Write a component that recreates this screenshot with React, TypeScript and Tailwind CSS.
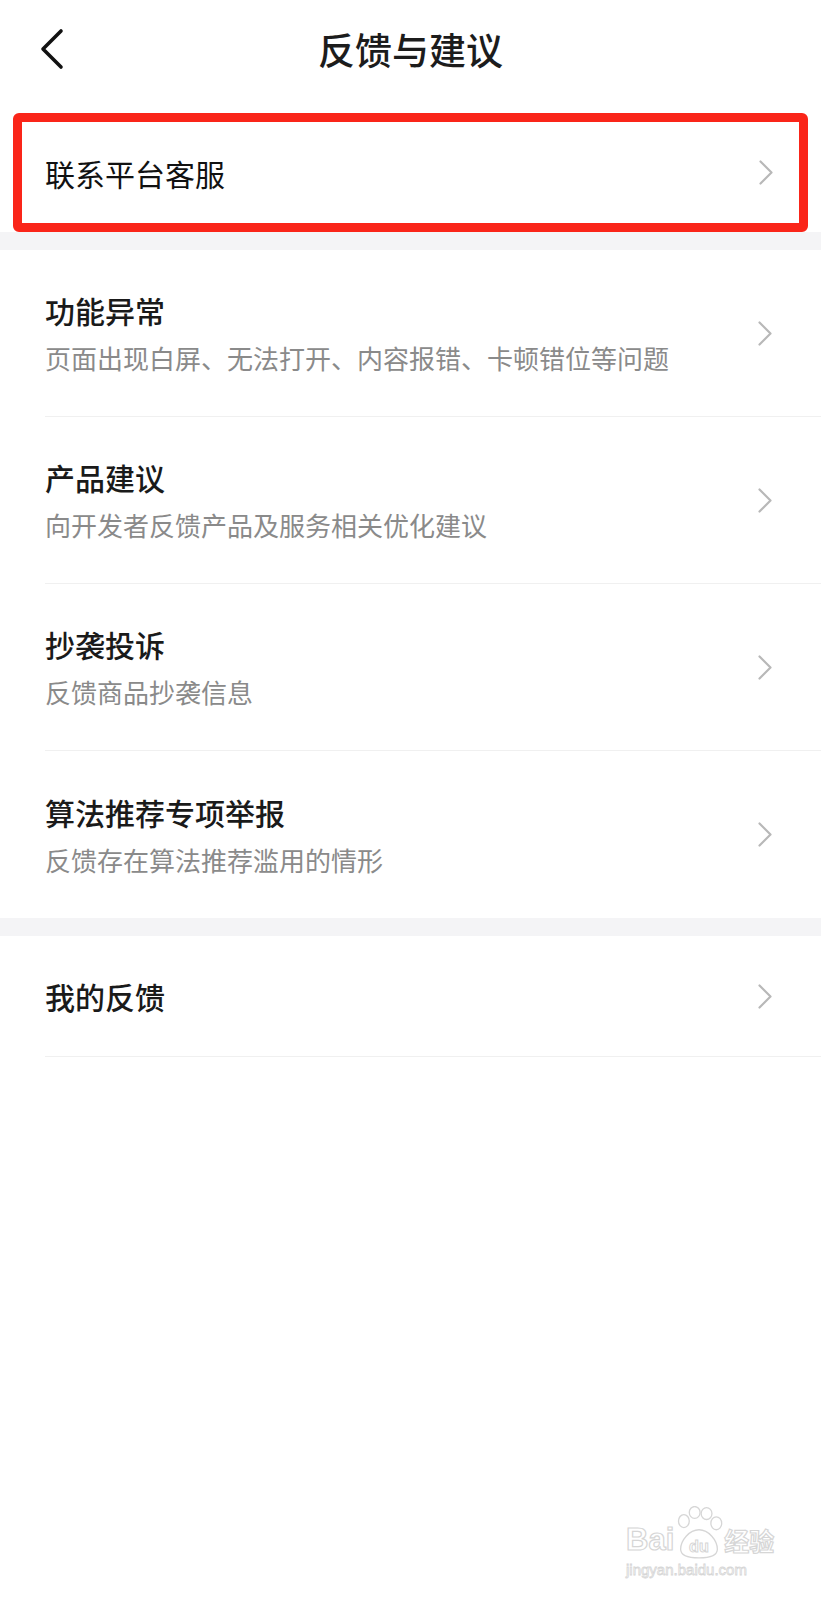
import React from 'react';

const ITEMS = [
  { title: '功能异常', desc: '页面出现白屏、无法打开、内容报错、卡顿错位等问题' },
  { title: '产品建议', desc: '向开发者反馈产品及服务相关优化建议' },
  { title: '抄袭投诉', desc: '反馈商品抄袭信息' },
  { title: '算法推荐专项举报', desc: '反馈存在算法推荐滥用的情形', last: true },
];

function Chevron() {
  return (
    <svg width="16" height="27" viewBox="0 0 16 27" fill="none" className="shrink-0">
      <path d="M2.5 2.5 L13.5 13.5 L2.5 24.5" stroke="#b8b8b8" strokeWidth="2.2" strokeLinecap="round" strokeLinejoin="round" />
    </svg>
  );
}

function Watermark() {
  return (
    <div className="absolute left-[626px] top-[1506px] flex flex-col items-start select-none">
      <div className="flex items-end text-transparent [-webkit-text-stroke:1.2px_#d6d6d6]">
        <span className="font-['Liberation_Sans',sans-serif] font-bold text-[31px] leading-[30px]">Bai</span>
        <svg width="50" height="54" viewBox="0 0 46 50" fill="none" className="-mb-[5px]">
          <ellipse cx="9" cy="14" rx="5" ry="6" stroke="#d6d6d6" strokeWidth="1.2" />
          <ellipse cx="19" cy="6" rx="5" ry="5.5" stroke="#d6d6d6" strokeWidth="1.2" />
          <ellipse cx="30" cy="7" rx="5" ry="5.5" stroke="#d6d6d6" strokeWidth="1.2" />
          <ellipse cx="39" cy="16" rx="5" ry="6" stroke="#d6d6d6" strokeWidth="1.2" />
          <path d="M23 22 C14 22 6 32 6 40 C6 46 12 48 23 48 C34 48 40 46 40 40 C40 32 32 22 23 22 Z" stroke="#d6d6d6" strokeWidth="1.2" />
          <text x="23" y="43" textAnchor="middle" fontFamily="Liberation Sans, sans-serif" fontWeight="700" fontSize="15" fill="none" stroke="#d6d6d6" strokeWidth="0.9">du</text>
        </svg>
        <span className="font-['Noto_Sans_CJK_SC',sans-serif] font-bold text-[25px] leading-[30px]">经验</span>
      </div>
      <span className="font-['Liberation_Sans',sans-serif] text-[15px] leading-[18px] mt-[6px] text-transparent [-webkit-text-stroke:0.8px_#d6d6d6]">jingyan.baidu.com</span>
    </div>
  );
}

export default function App() {
  return (
    <div className="relative w-full min-h-[1600px] bg-white font-['Noto_Sans_CJK_SC','Noto_Sans',sans-serif] overflow-hidden">
      <header className="grid grid-cols-[1fr_auto_1fr] items-center h-[98px]">
        <div className="pl-[39px] flex items-center">
          <svg width="26" height="42" viewBox="0 0 26 42" fill="none">
            <path d="M22 3 L4 21 L22 39" stroke="#111" strokeWidth="3.6" strokeLinecap="round" strokeLinejoin="round" />
          </svg>
        </div>
        <h1 className="text-[37px] leading-[44px] font-medium text-[#1c1c1c]">反馈与建议</h1>
        <div />
      </header>

      <div className="pt-[15px] px-[13px]">
        <div className="h-[119px] border-[9px] border-[#fa2519] rounded-[6px] flex items-center justify-between pl-[23px] pr-[25px]">
          <span className="text-[30px] leading-[40px] font-normal text-[#111]">联系平台客服</span>
          <Chevron />
        </div>
      </div>

      <div className="h-[18px] bg-[#f4f4f6]" />

      {ITEMS.map(item => (
        <div key={item.title} className="pl-[45px]">
          <div className={`h-[167px] flex items-center justify-between pr-[48px] ${item.last ? '' : 'border-b border-[#f0f0f0]'}`}>
            <div className="flex flex-col gap-[10px]">
              <span className="text-[30px] leading-[40px] font-medium text-[#1a1a1a]">{item.title}</span>
              <span className="text-[26px] leading-[36px] text-[#8a8a8a]">{item.desc}</span>
            </div>
            <Chevron />
          </div>
        </div>
      ))}

      <div className="h-[18px] bg-[#f4f4f6]" />

      <div className="pl-[45px]">
        <div className="h-[121px] flex items-center justify-between pr-[48px] border-b border-[#f0f0f0]">
          <span className="text-[30px] leading-[40px] font-medium text-[#1a1a1a]">我的反馈</span>
          <Chevron />
        </div>
      </div>

      <Watermark />
    </div>
  );
}
